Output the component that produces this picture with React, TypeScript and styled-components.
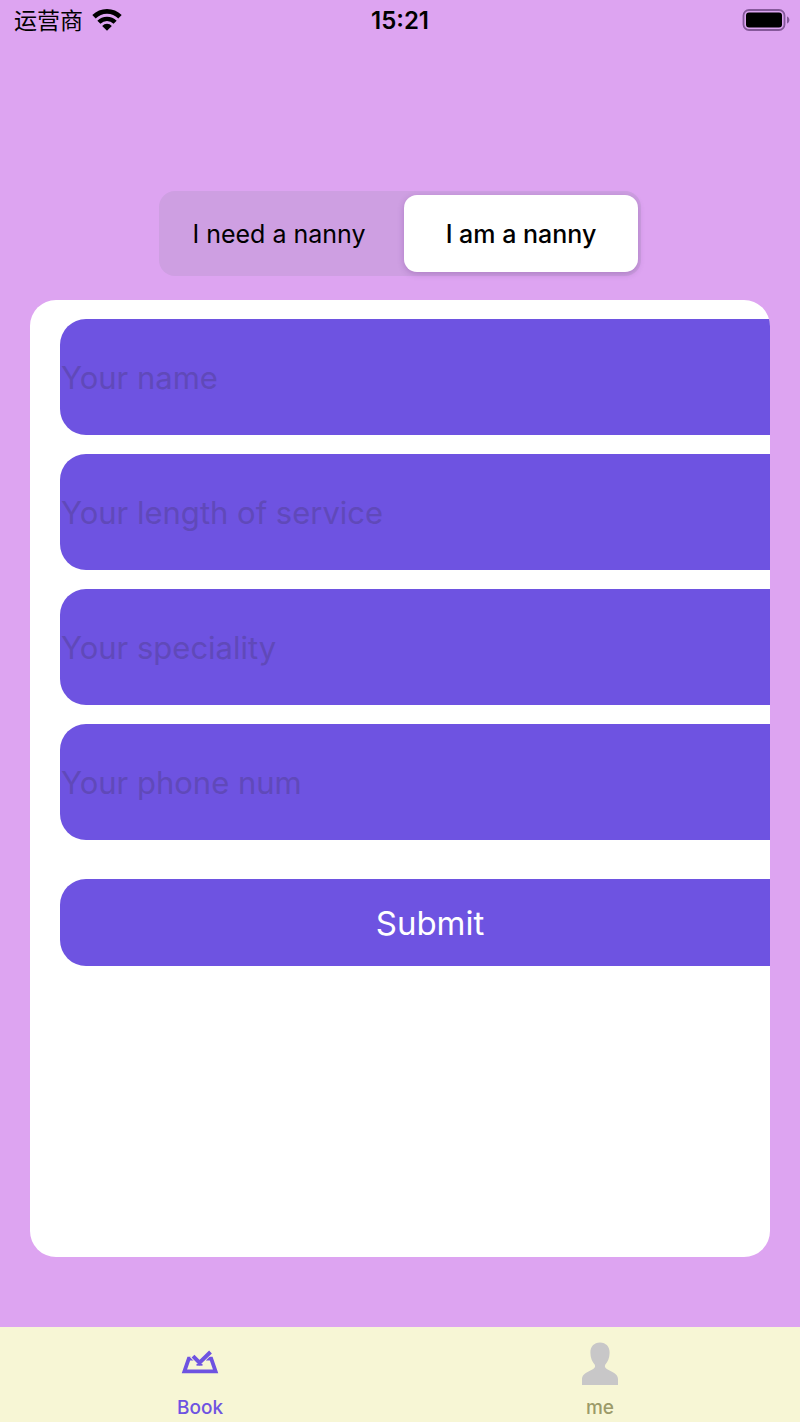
import { useState } from "react";
import styled, { createGlobalStyle } from "styled-components";

const GlobalStyle = createGlobalStyle`
  * {
    box-sizing: border-box;
  }

  body {
    margin: 0;
    background-color: #dda4f1;
    font-family: Inter, "Noto Sans CJK SC", sans-serif;
  }

  button,
  input {
    font-family: inherit;
  }
`;

const Page = styled.div`
  min-height: 100vh;
  display: flex;
  flex-direction: column;
  background-color: #dda4f1;
`;

const StatusBar = styled.header`
  height: 42px;
  padding: 0 10px;
  display: grid;
  grid-template-columns: 1fr auto 1fr;
  align-items: center;
  color: #000;
`;

const Carrier = styled.div`
  display: flex;
  align-items: center;
  gap: 9px;
  padding-left: 4px;
  font-size: 23px;
  line-height: 40px;
  font-weight: 400;
`;

const Clock = styled.div`
  font-size: 24px;
  line-height: 40px;
  font-weight: 600;
`;

const Battery = styled.svg`
  justify-self: end;
`;

const Main = styled.main`
  flex: 1;
  display: flex;
  flex-direction: column;
  gap: 24px;
  padding: 149px 30px 70px;
`;

const Segment = styled.div`
  align-self: center;
  width: 482px;
  max-width: 100%;
  height: 85px;
  padding: 4px 3px;
  display: grid;
  grid-template-columns: 1fr 1fr;
  gap: 8px;
  border-radius: 16px;
  background-color: #ce9fe2;
`;

const SegmentButton = styled.button<{ $active: boolean }>`
  border: none;
  border-radius: 13px;
  padding: 0;
  color: #000;
  font-size: 25px;
  line-height: 32px;
  font-weight: ${({ $active }) => ($active ? 500 : 400)};
  background-color: ${({ $active }) => ($active ? "#fff" : "transparent")};
  box-shadow: ${({ $active }) =>
    $active ? "0 2px 6px rgba(80, 30, 110, 0.25)" : "none"};
  cursor: pointer;
`;

const Card = styled.form`
  flex: 1;
  display: flex;
  flex-direction: column;
  gap: 19px;
  padding: 19px 0 19px 30px;
  border-radius: 26px;
  background-color: #fff;
  overflow: hidden;
`;

// as wide as the card itself, so the right end runs under its edge
const Field = styled.input`
  flex: none;
  width: calc(100% + 30px);
  height: 116px;
  padding: 0 1px;
  border: none;
  border-radius: 26px;
  outline: none;
  color: #fff;
  font-size: 31px;
  background-color: #6e53e1;

  &::placeholder {
    color: #6049b9;
    opacity: 1;
  }
`;

const SubmitButton = styled.button`
  flex: none;
  width: calc(100% + 30px);
  height: 87px;
  margin-top: 20px;
  padding: 0;
  border: none;
  border-radius: 26px;
  color: #fff;
  font-size: 33px;
  background-color: #6e53e1;
  cursor: pointer;
`;

const TabBar = styled.nav`
  height: 95px;
  display: grid;
  grid-template-columns: 1fr 1fr;
  background-color: #f7f6d5;
`;

const Tab = styled.a<{ $active: boolean }>`
  display: flex;
  flex-direction: column;
  align-items: center;
  gap: 11px;
  padding-top: 15px;
  color: ${({ $active }) => ($active ? "#6e53e1" : "#9b9a68")};
  font-size: 19px;
  line-height: 24px;
  font-weight: 500;
  text-decoration: none;
`;

const WifiIcon = () => (
  <svg width="30" height="24" viewBox="0 0 30 24" fill="none" stroke="#000">
    <path d="M2 7.8a18.4 18.4 0 0 1 26 0" strokeWidth="4.8" />
    <path d="M6.9 13.2a11.5 11.5 0 0 1 16.2 0" strokeWidth="4.4" />
    <path d="M15 21.8l-4.8-4.9a6.6 6.6 0 0 1 9.6 0z" fill="#000" stroke="none" />
  </svg>
);

const BatteryIcon = () => (
  <Battery width="48" height="24" viewBox="0 0 48 24">
    <rect
      x="1.5"
      y="1"
      width="41"
      height="20"
      rx="5.5"
      fill="none"
      stroke="#85589a"
      strokeWidth="1.8"
    />
    <rect x="4" y="3.5" width="36" height="15" rx="3" fill="#000" />
    <path d="M45 7.5c3.2 1.2 3.2 5.8 0 7z" fill="#85589a" />
  </Battery>
);

const BookIcon = () => (
  <svg width="38" height="43" viewBox="0 0 38 43" fill="none" stroke="#6e53e1">
    <path d="M13 16.6H7.8L3.4 29.4h31.2L30.2 16.6H25" strokeWidth="3.8" />
    <path d="M11 13.2l7.5 7.5L30.5 9" stroke="#f7f6d5" strokeWidth="5.6" />
    <path d="M12 14.2l6.5 6.5L29.5 10" strokeWidth="4" />
    <path d="M15.5 22.8h6" strokeWidth="1.8" />
  </svg>
);

const PersonIcon = () => (
  <svg width="38" height="43" viewBox="0 0 38 43" fill="#c8c7c8">
    <path d="M19 .5c-6 0-9.6 4.2-9.6 10.2 0 5 1.7 9 4.4 12 .8 1.6.2 3-1.6 4.2C7.500 29.5 1 31.500 1 37v6h36v-6c0-5.500-6.500-7.500-11.200-10.100-1.800-1.200-2.400-2.600-1.600-4.200 2.700-3 4.400-7 4.400-12C28.600 4.700 25 .5 19 .5z" />
  </svg>
);

const fields = [
  { name: "name", label: "Your name" },
  { name: "service", label: "Your length of service" },
  { name: "speciality", label: "Your speciality" },
  { name: "phone", label: "Your phone num" },
];

const roles = ["I need a nanny", "I am a nanny"];

const App = () => {
  const [role, setRole] = useState(roles[1]);

  return (
    <>
      <GlobalStyle />
      <Page>
        <StatusBar>
          <Carrier>
            运营商
            <WifiIcon />
          </Carrier>
          <Clock>15:21</Clock>
          <BatteryIcon />
        </StatusBar>
        <Main>
          <Segment>
            {roles.map((item) => (
              <SegmentButton
                key={item}
                type="button"
                $active={item === role}
                aria-pressed={item === role}
                onClick={() => setRole(item)}
              >
                {item}
              </SegmentButton>
            ))}
          </Segment>
          <Card onSubmit={(event) => event.preventDefault()}>
            {fields.map(({ name, label }) => (
              <Field
                key={name}
                name={name}
                type="text"
                placeholder={label}
                aria-label={label}
              />
            ))}
            <SubmitButton type="submit">Submit</SubmitButton>
          </Card>
        </Main>
        <TabBar>
          <Tab href="#book" $active>
            <BookIcon />
            Book
          </Tab>
          <Tab href="#me" $active={false}>
            <PersonIcon />
            me
          </Tab>
        </TabBar>
      </Page>
    </>
  );
};

export default App;
